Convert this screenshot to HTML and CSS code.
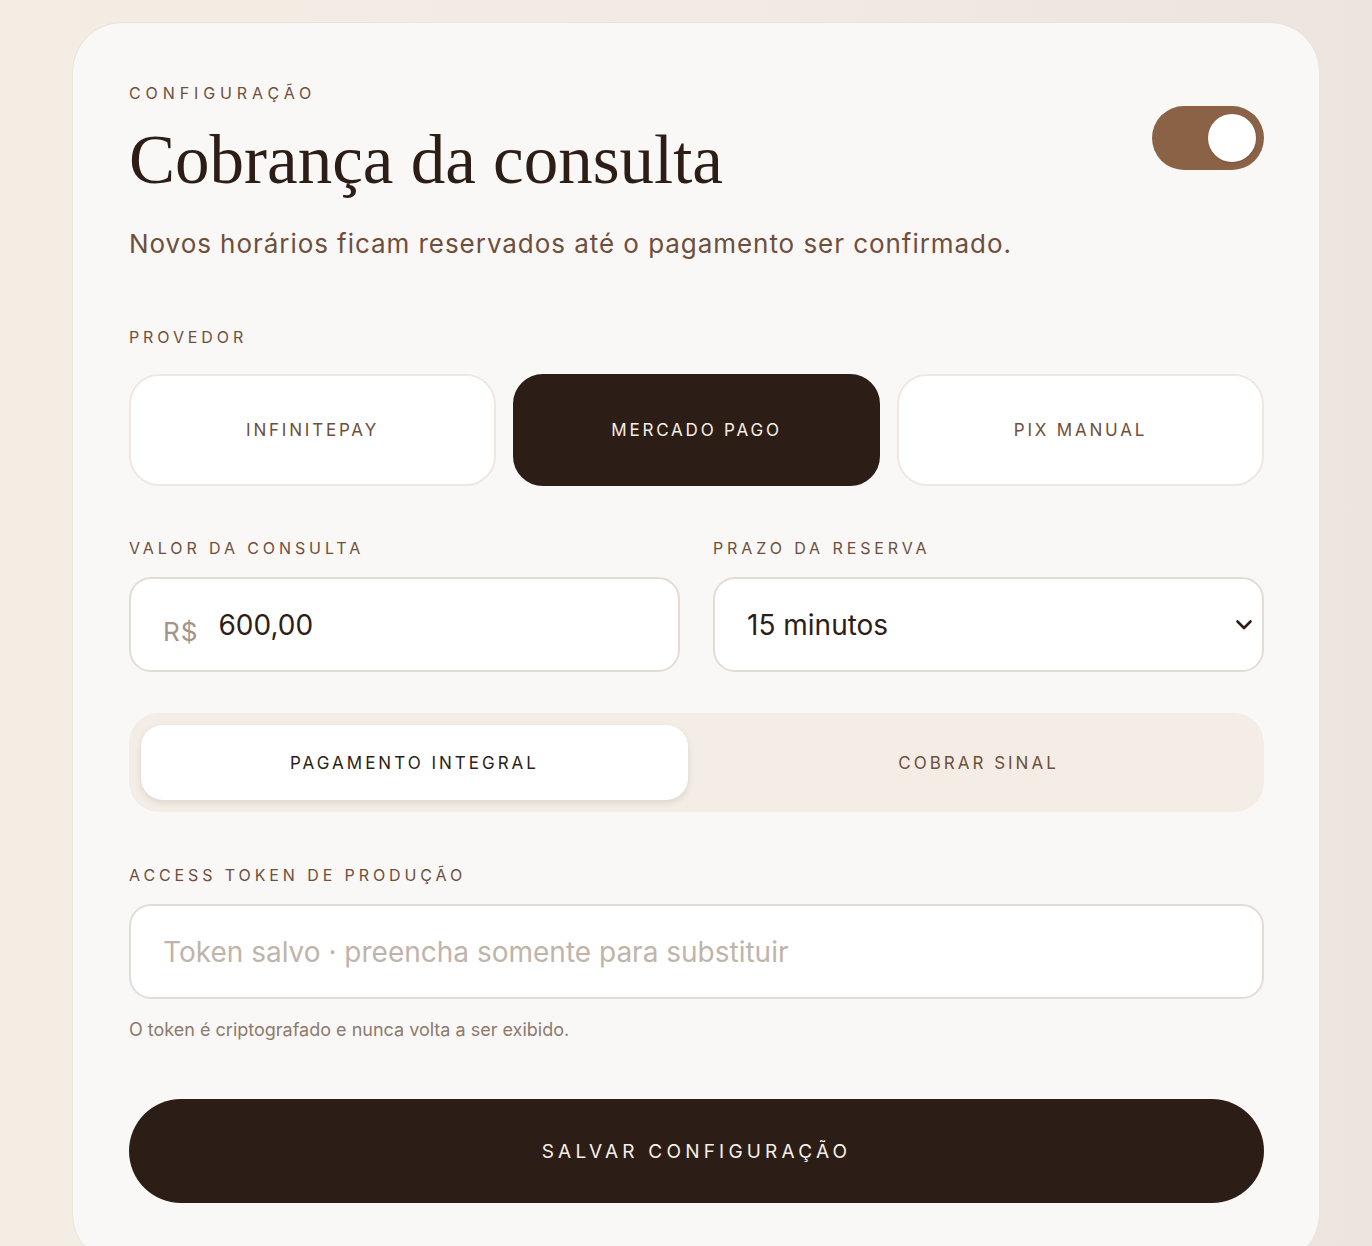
FILE: index.html
```html
<!DOCTYPE html>
<html lang="pt-BR">
<head>
  <meta charset="UTF-8" />
  <title>Cobrança da consulta</title>
  <meta name="viewport" content="width=device-width, initial-scale=1" />
  <link rel="stylesheet" href="styles.css">
</head>
<body>
  <div class="card">

    <div class="header">
      <div class="header-text">
        <div class="eyebrow">Configuração</div>
        <h1>Cobrança da consulta</h1>
      </div>
      <div class="toggle on"><div class="knob"></div></div>
    </div>

    <p class="lead">Novos horários ficam reservados até o pagamento ser confirmado.</p>

    <div class="section-label">Provedor</div>
    <div class="providers">
      <button class="provider">InfinitePay</button>
      <button class="provider active">Mercado Pago</button>
      <button class="provider">Pix manual</button>
    </div>

    <div class="row">
      <div class="field">
        <label>Valor da consulta</label>
        <div class="input-box">
          <span class="prefix">R$</span>
          <span class="value">600,00</span>
        </div>
      </div>
      <div class="field">
        <label>Prazo da reserva</label>
        <div class="input-box select">
          <span class="value">15 minutos</span>
          <svg class="chevron" width="18" height="12" viewBox="0 0 18 12">
            <polyline points="2.5,2.5 9,9 15.5,2.5" fill="none" stroke="#2c1e16" stroke-width="2.6" stroke-linecap="round" stroke-linejoin="round" />
          </svg>
        </div>
      </div>
    </div>

    <div class="segmented">
      <div class="segment active">Pagamento integral</div>
      <div class="segment">Cobrar sinal</div>
    </div>

    <div class="field token">
      <label>Access token de produção</label>
      <div class="input-box">
        <span class="placeholder">Token salvo · preencha somente para substituir</span>
      </div>
      <div class="hint">O token é criptografado e nunca volta a ser exibido.</div>
    </div>

    <button class="save">Salvar configuração</button>
  </div>
</body>
</html>
```

FILE: styles.css
```css
:root {
  --dark: #2c1e16;
  --brown: #6e4f3c;
  --accent: #8a6246;
  --card: #faf8f6;
  --border: #e2dcd6;
  --soft: #f3ede5;
}

* {
  box-sizing: border-box;
  margin: 0;
  padding: 0;
}

body {
  font-family: Inter, 'Noto Sans', sans-serif;
  background: linear-gradient(90deg, #f3ede4 0%, #f1eae3 60%, #ebe4df 100%);
  height: 100vh;
  overflow: hidden;
  padding: 22px 52px 0 72px;
}

.card {
  width: 1248px;
  background: var(--card);
  border: 1px solid #e9e3dd;
  border-radius: 50px;
  padding: 60px 55px 60px 56px;
}

.header {
  display: flex;
  justify-content: space-between;
  align-items: flex-start;
}

.section-label,
label {
  display: block;
  font-size: 16px;
  line-height: 20px;
  letter-spacing: 3.9px;
  text-transform: uppercase;
  color: var(--brown);
}

.eyebrow {
  font-size: 16px;
  line-height: 20px;
  letter-spacing: 4.9px;
  text-transform: uppercase;
  color: var(--brown);
}

h1 {
  font-family: 'Liberation Serif', 'DejaVu Serif', serif;
  font-weight: 400;
  font-size: 69px;
  line-height: 70px;
  color: var(--dark);
  margin-top: 22px;
}

.toggle {
  width: 112px;
  height: 64px;
  border-radius: 32px;
  background: var(--accent);
  margin-top: 23px;
  padding: 8px;
  display: flex;
}

.toggle.on { justify-content: flex-end; }

.knob {
  width: 48px;
  height: 48px;
  border-radius: 50%;
  background: #fff;
  box-shadow: 0 1px 2px rgba(0,0,0,0.15);
}

.lead {
  font-size: 26px;
  line-height: 34px;
  letter-spacing: 0.95px;
  color: var(--brown);
  margin-top: 32px;
}

.section-label {
  margin-top: 66px;
}

.providers {
  display: grid;
  grid-template-columns: repeat(3, 1fr);
  gap: 17px;
  margin-top: 27px;
}

.provider {
  height: 112px;
  border-radius: 30px;
  border: 2px solid #efe8e1;
  background: #fff;
  font-family: inherit;
  font-size: 17px;
  letter-spacing: 2.8px;
  text-transform: uppercase;
  color: var(--brown);
}

.provider.active {
  background: var(--dark);
  border-color: var(--dark);
  color: #f6efe8;
}

.row {
  display: grid;
  grid-template-columns: 1fr 1fr;
  gap: 33px;
  margin-top: 52px;
}

.field label {
  margin-bottom: 19px;
}

.input-box {
  height: 95px;
  border: 2px solid var(--border);
  border-radius: 22px;
  background: #fff;
  display: flex;
  align-items: center;
  padding: 0 32px;
}

.prefix {
  font-size: 26px;
  color: #a39388;
  margin-top: 14px;
  margin-right: 20px;
  letter-spacing: 1px;
}

.value {
  font-size: 28px;
  color: var(--dark);
}

.select {
  justify-content: space-between;
  padding-right: 9px;
}

.segmented {
  display: grid;
  grid-template-columns: 1fr 1fr;
  gap: 17px;
  background: var(--soft);
  border-radius: 30px;
  padding: 12px;
  margin-top: 41px;
}

.segment {
  height: 75px;
  display: flex;
  align-items: center;
  justify-content: center;
  font-size: 17px;
  letter-spacing: 3px;
  text-transform: uppercase;
  color: var(--brown);
}

.segment.active {
  background: #fff;
  border-radius: 22px;
  color: var(--dark);
  box-shadow: 0 3px 6px rgba(80, 50, 30, 0.12);
}

.token {
  margin-top: 53px;
}

.placeholder {
  font-size: 28px;
  color: #bfb4aa;
}

.hint {
  font-size: 18px;
  line-height: 24px;
  color: #8c7a6e;
  margin-top: 19px;
}

.save {
  display: block;
  width: 100%;
  height: 104px;
  margin-top: 57px;
  border: none;
  border-radius: 52px;
  background: var(--dark);
  color: #f6efe8;
  font-family: inherit;
  font-size: 19px;
  letter-spacing: 4.2px;
  text-transform: uppercase;
}
```
